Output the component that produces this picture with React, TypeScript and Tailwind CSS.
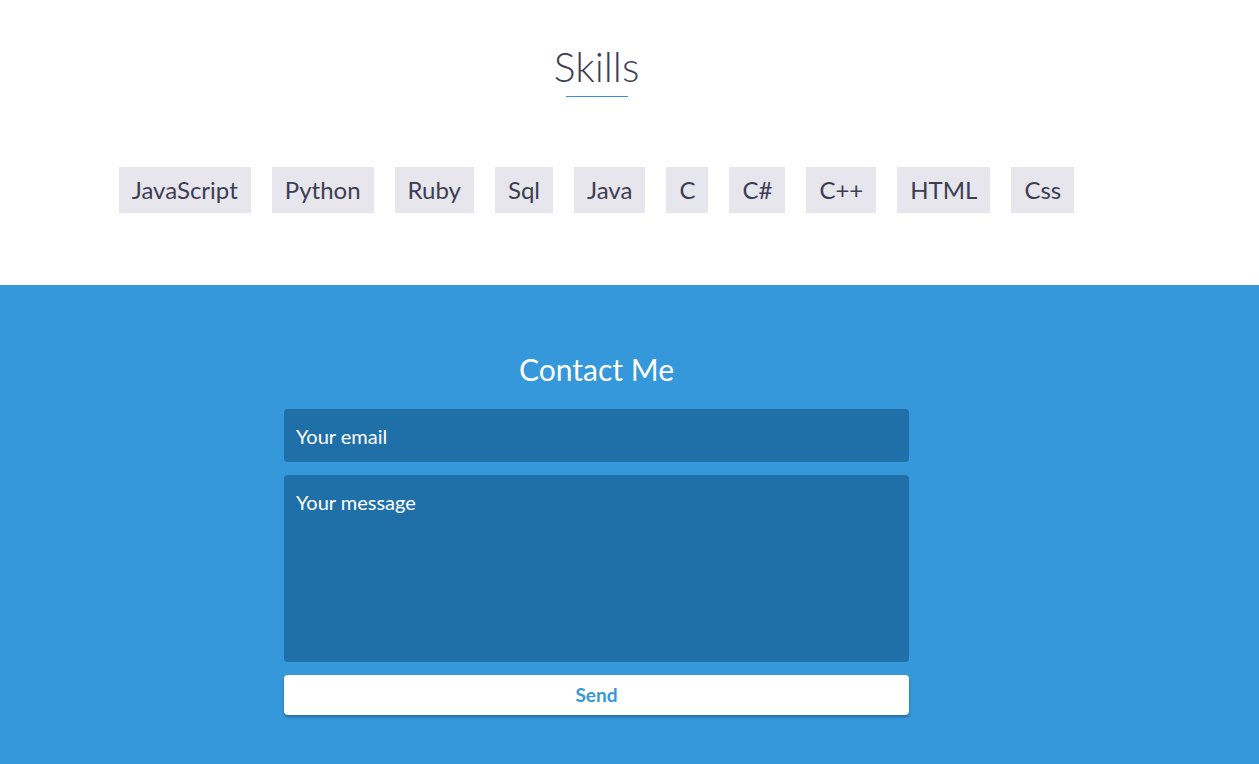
export default function App() {
  const skills = ['JavaScript', 'Python', 'Ruby', 'Sql', 'Java', 'C', 'C#', 'C++', 'HTML', 'Css']

  return (
    <div className="w-[1259px] min-h-[764px] bg-white font-['Lato','Liberation_Sans',sans-serif]">
      {/* Skills */}
      <section className="w-[1193px] h-[285px] flex flex-col items-center pt-[40px]">
        <h2 className="text-[41px] font-light leading-[54px] text-[#3d3d55]">Skills</h2>
        <div className="w-[62px] border-t border-[#3590d8] mt-[2px]" />
        <div className="flex gap-[21px] mt-[70px]">
          {skills.map((s) => (
            <span
              key={s}
              className="h-[46px] px-[13px] flex items-center bg-[#e6e6ec] text-[24px] text-[#3d3d55]"
            >
              {s}
            </span>
          ))}
        </div>
      </section>

      {/* Contact */}
      <section className="bg-[#3598db] h-[479px]">
        <div className="w-[1193px] flex flex-col items-center pt-[66px]">
          <h2 className="text-[30px] leading-[36px] text-white">Contact Me</h2>
          <form className="w-[625px] flex flex-col gap-[13px] mt-[22px]">
            <input
              placeholder="Your email"
              className="h-[53px] rounded-[4px] bg-[#1f70a8] px-3 pt-[1px] text-[20px] text-white placeholder:text-white outline-none"
            />
            <textarea
              placeholder="Your message"
              className="h-[187px] rounded-[4px] bg-[#1f70a8] px-3 pt-[12px] text-[20px] text-white placeholder:text-white outline-none resize-none"
            />
            <button
              type="button"
              className="h-[40px] rounded-[4px] bg-white text-[19px] font-bold text-[#3598db] shadow-[0_2px_3px_rgba(0,0,0,0.3)]"
            >
              Send
            </button>
          </form>
        </div>
      </section>
    </div>
  )
}
